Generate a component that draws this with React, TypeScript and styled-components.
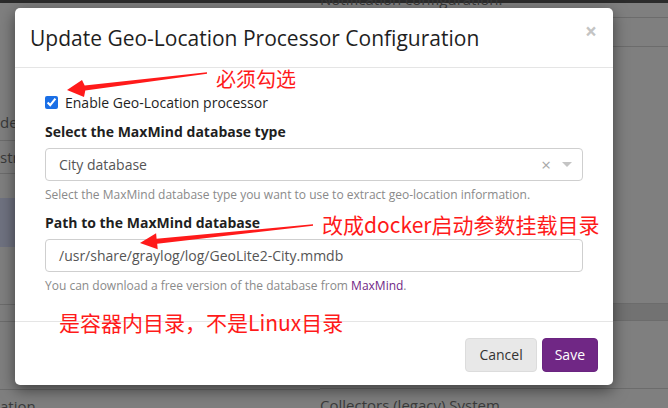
import React from "react";
import styled, { createGlobalStyle } from "styled-components";

const GlobalStyle = createGlobalStyle`
  html, body {
    margin: 0;
    padding: 0;
    width: 668px;
    height: 408px;
    overflow: hidden;
    font-family: "Open Sans", "Noto Sans", sans-serif;
  }
`;

const Page = styled.div`
  position: relative;
  width: 668px;
  height: 408px;
  overflow: hidden;
  background: #7f7f7f;
  color: #3c3c3c;
  font-size: 14px;
`;

const TopBar = styled.div`
  height: 3px;
  background: #2b2b2b;
`;

const Columns = styled.div`
  display: grid;
  grid-template-columns: 320px 1fr;
`;

const Column = styled.div`
  display: flex;
  flex-direction: column;
`;

const BgRow = styled.div<{ $h: number; $line?: boolean; $tint?: string }>`
  height: ${({ $h }) => $h}px;
  border-bottom: ${({ $line }) => ($line ? "1px solid #6c6c6c" : "none")};
  background: ${({ $tint }) => $tint || "transparent"};
  display: flex;
  align-items: center;
  white-space: nowrap;
  overflow: visible;
  font-size: 15px;
`;

const BgText = styled.span<{ $shift?: number }>`
  margin-top: ${({ $shift }) => $shift || 0}px;
  color: #3a3a3a;
`;

const Modal = styled.div`
  position: absolute;
  left: 15px;
  top: 8px;
  width: 598px;
  height: 377px;
  background: #fff;
  border-radius: 5px;
  box-shadow: 0 5px 15px rgba(0, 0, 0, 0.5);
  display: flex;
  flex-direction: column;
  color: #1f1f1f;
`;

const Header = styled.div`
  height: 60px;
  box-sizing: border-box;
  padding: 0 16px 0 15px;
  border-bottom: 1px solid #e5e5e5;
  display: flex;
  align-items: center;
  justify-content: space-between;
`;

const Title = styled.h4`
  margin: 0;
  font-size: 21px;
  font-weight: 400;
  color: #1f1f1f;
`;

const Close = styled.span`
  font-size: 21px;
  font-weight: 700;
  color: #c4c4c4;
  margin-top: -14px;
`;

const Body = styled.div`
  flex: 1;
  padding: 24px 30px 0;
  display: flex;
  flex-direction: column;
`;

const CheckRow = styled.label`
  display: flex;
  align-items: center;
  gap: 7px;
  height: 20px;
  font-size: 14px;
  color: #1f1f1f;
`;

const Check = styled.input`
  margin: 0;
  width: 13px;
  height: 13px;
  accent-color: #1a6fe6;
`;

const FieldLabel = styled.div<{ $top: number }>`
  margin-top: ${({ $top }) => $top}px;
  font-weight: 700;
  font-size: 14px;
  line-height: 20px;
  color: #1f1f1f;
`;

const Box = styled.div`
  margin-top: 6px;
  height: 33px;
  box-sizing: border-box;
  border: 1px solid #cfcfcf;
  border-radius: 4px;
  display: flex;
  align-items: center;
  padding: 0 10px 0 13px;
  font-size: 14px;
  color: #555;
`;

const BoxText = styled.span`
  flex: 1;
`;

const ClearMark = styled.span`
  color: #a8a8a8;
  font-size: 17px;
  margin-right: 11px;
  line-height: 1;
`;

const Caret = styled.span`
  width: 0;
  height: 0;
  border-left: 5px solid transparent;
  border-right: 5px solid transparent;
  border-top: 5px solid #c4c4c4;
`;

const Help = styled.div`
  margin-top: 5px;
  font-size: 12px;
  line-height: 17px;
  color: #8a8a8a;
`;

const Link = styled.span`
  color: #702785;
`;

const Footer = styled.div`
  height: 64px;
  box-sizing: border-box;
  border-top: 1px solid #e5e5e5;
  padding: 0 15px 0 0;
  display: flex;
  align-items: center;
  justify-content: flex-end;
  gap: 5px;
`;

const Button = styled.button<{ $primary?: boolean }>`
  height: 34px;
  padding: 0 ${({ $primary }) => ($primary ? 12 : 13)}px;
  border-radius: 4px;
  font-family: "Open Sans", "Noto Sans", sans-serif;
  font-size: 14px;
  border: 1px solid ${({ $primary }) => ($primary ? "#6a2480" : "#dcdcdc")};
  background: ${({ $primary }) => ($primary ? "#702785" : "#e8e8e8")};
  color: ${({ $primary }) => ($primary ? "#fff" : "#333")};
  margin-top: 2px;
`;

const Note = styled.div<{ $x: number; $y: number; $size: number }>`
  position: absolute;
  left: ${({ $x }) => $x}px;
  top: ${({ $y }) => $y}px;
  font-family: "Noto Sans CJK SC", "Noto Sans", sans-serif;
  font-size: ${({ $size }) => $size}px;
  line-height: 1;
  color: #ff1a1a;
  white-space: nowrap;
`;

const ArrowLayer = styled.svg`
  position: absolute;
  left: 0;
  top: 0;
  width: 668px;
  height: 408px;
  pointer-events: none;
`;

export default function App() {
  return (
    <Page>
      <GlobalStyle />
      <TopBar />
      <Columns>
        <Column>
          <BgRow $h={100} />
          <BgRow $h={37} $line>
            <BgText>de</BgText>
          </BgRow>
          <BgRow $h={32} $line>
            <BgText>str</BgText>
          </BgRow>
          <BgRow $h={24} />
          <BgRow $h={49} $tint="#6f7280" />
          <BgRow $h={57} $line />
          <BgRow $h={16} $line />
          <BgRow $h={67} $line />
          <BgRow $h={22}>
            <BgText $shift={10}>ation</BgText>
          </BgRow>
        </Column>
        <Column>
          <BgRow $h={14} $line>
            <BgText $shift={-22}>Notification configuration.</BgText>
          </BgRow>
          <BgRow $h={28} $line />
          <BgRow $h={256} $line />
          <BgRow $h={16} $line $tint="#727272" />
          <BgRow $h={67} $line />
          <BgRow $h={22}>
            <BgText $shift={10}>Collectors (legacy) System</BgText>
          </BgRow>
        </Column>
      </Columns>

      <Modal>
        <Header>
          <Title>Update Geo-Location Processor Configuration</Title>
          <Close>×</Close>
        </Header>
        <Body>
          <CheckRow>
            <Check type="checkbox" checked readOnly />
            Enable Geo-Location processor
          </CheckRow>
          <FieldLabel $top={10}>Select the MaxMind database type</FieldLabel>
          <Box>
            <BoxText>City database</BoxText>
            <ClearMark>×</ClearMark>
            <Caret />
          </Box>
          <Help>
            Select the MaxMind database type you want to use to extract
            geo-location information.
          </Help>
          <FieldLabel $top={10}>Path to the MaxMind database</FieldLabel>
          <Box>
            <BoxText>/usr/share/graylog/log/GeoLite2-City.mmdb</BoxText>
          </Box>
          <Help>
            You can download a free version of the database from{" "}
            <Link>MaxMind</Link>.
          </Help>
        </Body>
        <Footer>
          <Button>Cancel</Button>
          <Button $primary>Save</Button>
        </Footer>
      </Modal>

      <Note $x={216} $y={69} $size={20}>
        必须勾选
      </Note>
      <Note $x={322} $y={214} $size={21}>
        改成docker启动参数挂载目录
      </Note>
      <Note $x={59} $y={312} $size={21}>
        是容器内目录，不是Linux目录
      </Note>

      <ArrowLayer viewBox="0 0 668 408">
        <polygon
          fill="#ff1a1a"
          points="207,72.3 84.7,85.5 82,80 67,90 84,97 85.3,90.5 207,73.7"
        />
        <polygon
          fill="#ff1a1a"
          points="313,224.3 156.6,238.7 156.1,233.2 140,243 157.7,249.2 157.2,243.7 313,225.7"
        />
      </ArrowLayer>
    </Page>
  );
}
